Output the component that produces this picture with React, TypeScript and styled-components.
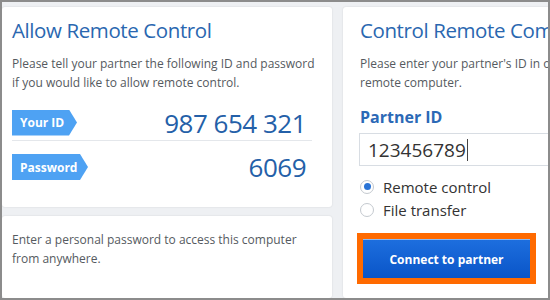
import React from "react";
import styled, { createGlobalStyle } from "styled-components";

const Global = createGlobalStyle`
  html, body { margin: 0; padding: 0; background: #fff; }
  * { box-sizing: border-box; }
`;

const Frame = styled.div`
  width: 550px;
  height: 300px;
  border: 2px solid #8c8c8c;
  background: #eef0f3;
  overflow: hidden;
  display: flex;
  gap: 11px;
  padding-top: 5px;
  font-family: "Open Sans", "Noto Sans", sans-serif;
`;

const Column = styled.div`
  width: 330px;
  flex: none;
  display: flex;
  flex-direction: column;
  gap: 9px;
  min-height: 0;
`;

const Card = styled.div<{ $h?: number; $w?: number; $pt?: number; $pl?: number }>`
  background: #fff;
  border-radius: 3px;
  box-shadow: 0 0 2px rgba(0, 0, 0, 0.12);
  padding: ${(p) => p.$pt ?? 8}px 20px 0 ${(p) => p.$pl ?? 10}px;
  overflow: hidden;
  ${(p) => (p.$h ? `height: ${p.$h}px; flex: none;` : "flex: 1; min-height: 0;")}
  ${(p) => (p.$w ? `width: ${p.$w}px; flex: none;` : "")}
`;

const Title = styled.h1`
  margin: 0;
  font-weight: 400;
  font-size: 20.5px;
  letter-spacing: -0.4px;
  line-height: 30px;
  color: #2a67b0;
  white-space: nowrap;
`;

const Desc = styled.p<{ $top?: number }>`
  margin: ${(p) => p.$top ?? 9}px 0 0;
  font-size: 12px;
  line-height: 19px;
  color: #555a60;
  white-space: nowrap;
`;

const Rows = styled.div`
  margin-top: 13px;
  display: flex;
  flex-direction: column;
  gap: 8px;
`;

const InfoRow = styled.div<{ $line?: boolean }>`
  display: flex;
  align-items: center;
  justify-content: space-between;
  height: 36px;
  padding-right: 6px;
  ${(p) => (p.$line ? "border-bottom: 1px solid #e4e7eb;" : "")}
`;

const Badge = styled.div<{ $w: number }>`
  width: ${(p) => p.$w}px;
  height: 26px;
  background: #4ea2f3;
  color: #fff;
  font-weight: 700;
  font-size: 12px;
  display: flex;
  align-items: center;
  padding-left: 8px;
  clip-path: polygon(0 0, calc(100% - 8px) 0, 100% 50%, calc(100% - 8px) 100%, 0 100%);
`;

const Value = styled.div`
  font-size: 26px;
  letter-spacing: -0.5px;
  color: #2460a8;
`;

const Label = styled.div`
  margin-top: 14px;
  font-size: 16px;
  font-weight: 700;
  color: #2b69b6;
`;

const Input = styled.div`
  margin-top: 5px;
  margin-left: -1px;
  height: 33px;
  width: 220px;
  border: 1px solid #d8dde3;
  display: flex;
  align-items: center;
  padding-left: 8px;
  font-size: 19px;
  color: #333;
`;

const Caret = styled.span`
  display: inline-block;
  width: 1px;
  height: 22px;
  background: #444;
  margin-left: 1px;
`;

const Radios = styled.div`
  margin-top: 10px;
  display: flex;
  flex-direction: column;
  gap: 2px;
`;

const RadioRow = styled.div`
  display: flex;
  align-items: center;
  gap: 9px;
  font-size: 15px;
  color: #333;
  height: 21px;
`;

const Dot = styled.span<{ $on?: boolean }>`
  width: 14px;
  height: 14px;
  border-radius: 50%;
  border: 1px solid #c4c9cf;
  background: #fff;
  display: flex;
  align-items: center;
  justify-content: center;
  &::after {
    content: "";
    width: 7px;
    height: 7px;
    border-radius: 50%;
    background: ${(p) => (p.$on ? "#2a74d6" : "transparent")};
  }
`;

const Highlight = styled.div`
  margin-top: 13px;
  margin-left: -3px;
  width: 179px;
  height: 51px;
  border: 6px solid #ff6a00;
  background: #ff6a00;
`;

const Button = styled.div`
  height: 100%;
  background: linear-gradient(#1d6ede, #0a55c8);
  border-top: 1px solid #8ab8f2;
  color: #fff;
  font-weight: 700;
  font-size: 12px;
  display: flex;
  align-items: center;
  justify-content: center;
`;

const PwBox = styled.div`
  margin-top: 37px;
  margin-left: 2px;
  height: 20px;
  width: 301px;
  border: 1px solid #dfe3e8;
`;

export default function App() {
  return (
    <>
      <Global />
      <Frame>
        <Column>
          <Card $h={200}>
            <Title>Allow Remote Control</Title>
            <Desc>
              Please tell your partner the following ID and password
              <br />
              if you would like to allow remote control.
            </Desc>
            <Rows>
              <InfoRow $line>
                <Badge $w={65}>Your ID</Badge>
                <Value>987 654 321</Value>
              </InfoRow>
              <InfoRow>
                <Badge $w={76}>Password</Badge>
                <Value>6069</Value>
              </InfoRow>
            </Rows>
          </Card>
          <Card $pt={14}>
            <Desc $top={0}>
              Enter a personal password to access this computer
              <br />
              from anywhere.
            </Desc>
            <PwBox />
          </Card>
        </Column>
        <Card $w={230} $pl={17}>
          <Title>Control Remote Computer</Title>
          <Desc>
            Please enter your partner's ID in order to control the
            <br />
            remote computer.
          </Desc>
          <Label>Partner ID</Label>
          <Input>
            123456789
            <Caret />
          </Input>
          <Radios>
            <RadioRow>
              <Dot $on />
              Remote control
            </RadioRow>
            <RadioRow>
              <Dot />
              File transfer
            </RadioRow>
          </Radios>
          <Highlight>
            <Button>Connect to partner</Button>
          </Highlight>
        </Card>
      </Frame>
    </>
  );
}
